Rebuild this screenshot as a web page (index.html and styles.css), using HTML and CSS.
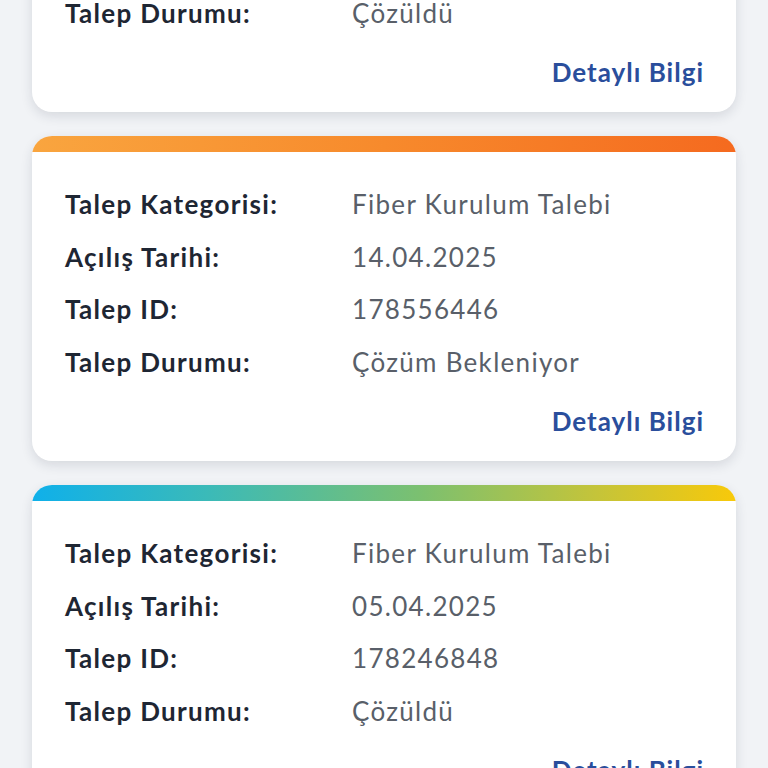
FILE: index.html
```html
<!DOCTYPE html>
<html lang="tr">
<head>
<meta charset="utf-8">
<link rel="stylesheet" href="styles.css">
</head>
<body>
<div class="list">
  <div class="card">
    <div class="bar bar-blue"></div>
    <div class="body">
      <div class="row"><span class="label">Talep Kategorisi:</span><span class="value">Fiber Kurulum Talebi</span></div>
      <div class="row"><span class="label">Açılış Tarihi:</span><span class="value">02.04.2025</span></div>
      <div class="row"><span class="label">Talep ID:</span><span class="value">178102233</span></div>
      <div class="row"><span class="label">Talep Durumu:</span><span class="value">Çözüldü</span></div>
      <div class="link-row"><a class="link">Detaylı Bilgi</a></div>
    </div>
  </div>
  <div class="card">
    <div class="bar bar-orange"></div>
    <div class="body">
      <div class="row"><span class="label">Talep Kategorisi:</span><span class="value">Fiber Kurulum Talebi</span></div>
      <div class="row"><span class="label">Açılış Tarihi:</span><span class="value">14.04.2025</span></div>
      <div class="row"><span class="label">Talep ID:</span><span class="value">178556446</span></div>
      <div class="row"><span class="label">Talep Durumu:</span><span class="value">Çözüm Bekleniyor</span></div>
      <div class="link-row"><a class="link">Detaylı Bilgi</a></div>
    </div>
  </div>
  <div class="card">
    <div class="bar bar-rainbow"></div>
    <div class="body">
      <div class="row"><span class="label">Talep Kategorisi:</span><span class="value">Fiber Kurulum Talebi</span></div>
      <div class="row"><span class="label">Açılış Tarihi:</span><span class="value">05.04.2025</span></div>
      <div class="row"><span class="label">Talep ID:</span><span class="value">178246848</span></div>
      <div class="row"><span class="label">Talep Durumu:</span><span class="value">Çözüldü</span></div>
      <div class="link-row"><a class="link">Detaylı Bilgi</a></div>
    </div>
  </div>
</div>
</body>
</html>
```
FILE: styles.css
```css
html, body {
  margin: 0;
  padding: 0;
  background: #f1f3f6;
  overflow: hidden;
}
body {
  font-family: "Lato", "Noto Sans", sans-serif;
}
.list {
  display: flex;
  flex-direction: column;
  gap: 24px;
  padding: 0 32px;
  margin-top: -213px;
}
.card {
  background: #ffffff;
  border-radius: 20px;
  box-shadow: 0 4px 12px rgba(30, 40, 60, 0.13);
  overflow: hidden;
}
.bar {
  height: 16px;
}
.bar-orange {
  background: linear-gradient(90deg, #f9a53f 0%, #f78a2c 50%, #f56a1f 100%);
}
.bar-rainbow {
  background: linear-gradient(90deg, #0fb0ea 0%, #3bbab8 25%, #7bc070 55%, #c4c43a 80%, #f8c90a 100%);
}
.bar-blue {
  background: linear-gradient(90deg, #0fb0ea 0%, #2a7fd6 100%);
}
.body {
  padding: 26px 33px 22px 33px;
}
.row {
  display: flex;
  height: 52.5px;
  align-items: center;
  font-size: 26px;
  letter-spacing: 1.3px;
}
.label {
  width: 287px;
  font-weight: 700;
  color: #1e2633;
}
.value {
  color: #595f69;
  font-weight: 400;
}
.link-row {
  display: flex;
  justify-content: flex-end;
  height: 36px;
  align-items: center;
  margin-top: 15px;
}
.link {
  font-size: 26px;
  font-weight: 700;
  letter-spacing: 1px;
  margin-right: -1px;
  color: #2a4e9c;
}
```
